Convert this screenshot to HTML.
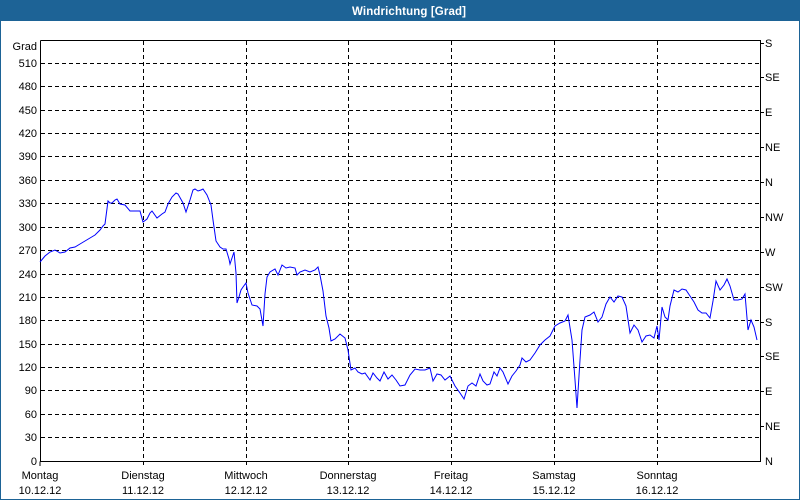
<!DOCTYPE html>
<html><head><meta charset="utf-8"><style>
html,body{margin:0;padding:0;width:800px;height:500px;overflow:hidden;background:#fff}
</style></head><body>
<svg width="800" height="500" xmlns="http://www.w3.org/2000/svg" font-family="Liberation Sans, sans-serif" font-size="11">
<rect x="0" y="0" width="800" height="500" fill="#fff"/>
<rect x="0.5" y="0.5" width="799" height="499" fill="none" stroke="#1d6396" stroke-width="1"/>
<rect x="0" y="0" width="800" height="21" fill="#1d6396"/>
<text x="409" y="15" fill="#fff" font-weight="bold" text-anchor="middle" font-size="11.5" textLength="114" lengthAdjust="spacing">Windrichtung [Grad]</text>
<g stroke="#000" stroke-width="1" stroke-dasharray="4,3" shape-rendering="crispEdges">
<line x1="41" y1="63.5" x2="760" y2="63.5"/>
<line x1="41" y1="86.5" x2="760" y2="86.5"/>
<line x1="41" y1="110.5" x2="760" y2="110.5"/>
<line x1="41" y1="133.5" x2="760" y2="133.5"/>
<line x1="41" y1="156.5" x2="760" y2="156.5"/>
<line x1="41" y1="180.5" x2="760" y2="180.5"/>
<line x1="41" y1="203.5" x2="760" y2="203.5"/>
<line x1="41" y1="227.5" x2="760" y2="227.5"/>
<line x1="41" y1="250.5" x2="760" y2="250.5"/>
<line x1="41" y1="274.5" x2="760" y2="274.5"/>
<line x1="41" y1="297.5" x2="760" y2="297.5"/>
<line x1="41" y1="320.5" x2="760" y2="320.5"/>
<line x1="41" y1="344.5" x2="760" y2="344.5"/>
<line x1="41" y1="367.5" x2="760" y2="367.5"/>
<line x1="41" y1="390.5" x2="760" y2="390.5"/>
<line x1="41" y1="414.5" x2="760" y2="414.5"/>
<line x1="41" y1="437.5" x2="760" y2="437.5"/>
<line x1="143.5" y1="41" x2="143.5" y2="467"/>
<line x1="246.5" y1="41" x2="246.5" y2="467"/>
<line x1="348.5" y1="41" x2="348.5" y2="467"/>
<line x1="451.5" y1="41" x2="451.5" y2="467"/>
<line x1="554.5" y1="41" x2="554.5" y2="467"/>
<line x1="657.5" y1="41" x2="657.5" y2="467"/>
</g>
<g stroke="#000" stroke-width="1" fill="none" shape-rendering="crispEdges">
<polyline points="40.5,40.5 760.5,40.5 760.5,461.5 40.5,461.5 40.5,40.5"/>
<line x1="40" y1="461.5" x2="40" y2="466"/>
<line x1="760" y1="43.5" x2="764" y2="43.5"/><line x1="760" y1="77.5" x2="764" y2="77.5"/><line x1="760" y1="112.5" x2="764" y2="112.5"/><line x1="760" y1="147.5" x2="764" y2="147.5"/><line x1="760" y1="182.5" x2="764" y2="182.5"/><line x1="760" y1="217.5" x2="764" y2="217.5"/><line x1="760" y1="252.5" x2="764" y2="252.5"/><line x1="760" y1="287.5" x2="764" y2="287.5"/><line x1="760" y1="322.5" x2="764" y2="322.5"/><line x1="760" y1="356.5" x2="764" y2="356.5"/><line x1="760" y1="391.5" x2="764" y2="391.5"/><line x1="760" y1="426.5" x2="764" y2="426.5"/>
</g>
<g fill="#000" text-anchor="end">
<text x="37" y="50">Grad</text>
<text x="37" y="67">510</text><text x="37" y="90">480</text><text x="37" y="114">450</text><text x="37" y="137">420</text><text x="37" y="160">390</text><text x="37" y="184">360</text><text x="37" y="207">330</text><text x="37" y="231">300</text><text x="37" y="254">270</text><text x="37" y="278">240</text><text x="37" y="301">210</text><text x="37" y="324">180</text><text x="37" y="348">150</text><text x="37" y="371">120</text><text x="37" y="394">90</text><text x="37" y="418">60</text><text x="37" y="441">30</text><text x="37" y="465">0</text>
</g>
<g fill="#000">
<text x="765" y="47">S</text><text x="765" y="81">SE</text><text x="765" y="116">E</text><text x="765" y="151">NE</text><text x="765" y="186">N</text><text x="765" y="221">NW</text><text x="765" y="256">W</text><text x="765" y="291">SW</text><text x="765" y="326">S</text><text x="765" y="360">SE</text><text x="765" y="395">E</text><text x="765" y="430">NE</text><text x="765" y="465">N</text>
</g>
<g fill="#000" text-anchor="middle">
<text x="40" y="479">Montag</text><text x="40" y="494">10.12.12</text>
<text x="143" y="479">Dienstag</text><text x="143" y="494">11.12.12</text>
<text x="246" y="479">Mittwoch</text><text x="246" y="494">12.12.12</text>
<text x="348" y="479">Donnerstag</text><text x="348" y="494">13.12.12</text>
<text x="451" y="479">Freitag</text><text x="451" y="494">14.12.12</text>
<text x="554" y="479">Samstag</text><text x="554" y="494">15.12.12</text>
<text x="657" y="479">Sonntag</text><text x="657" y="494">16.12.12</text>
</g>
<polyline fill="none" stroke="#0000ff" stroke-width="1" points="40,262 45,256 50,252 55,250 60,253 65,252 70,248 75,247 80,244 85,241 90,238 95,235 100,230 103,226 105,224 108,201 110,203 112,203 115,200 117,199 120,204 125,205 130,211 135,211 140,211 143,222 147,219 150,213 152,211 157,218 162,214 165,212 168,204 172,197 176,193 178,194 183,203 186,212 190,200 193,190 195,189 198,191 201,190 203,189 207,195 211,205 213,220 216,241 220,247 223,249 226,249 229,259 230,264 233,255 234,252 236,273 237,303 239,297 241,290 243,287 246,283 248,293 252,305 257,306 260,309 263,326 265,294 267,277 270,272 275,269 278,275 282,265 286,268 290,267 295,268 297,275 300,272 305,270 310,272 315,270 318,267 320,275 323,291 326,316 329,328 331,341 335,339 340,334 345,338 348,350 351,370 355,368 358,372 362,374 365,373 370,380 373,373 377,378 380,381 384,372 388,379 392,375 396,380 400,386 405,385 410,375 415,369 420,370 425,370 430,368 433,381 437,374 441,375 445,380 450,376 455,386 460,393 464,399 468,386 472,383 476,386 480,374 483,381 487,385 490,384 494,372 497,376 500,368 503,372 508,384 512,376 516,371 520,365 522,358 526,362 530,360 535,353 540,345 545,340 550,336 555,326 560,323 565,321 568,315 572,340 575,380 577,408 580,360 582,330 585,317 590,315 594,312 598,322 602,317 606,304 610,297 614,302 618,296 622,297 626,306 630,333 634,325 638,330 642,342 646,336 650,335 654,338 657,326 659,340 662,307 665,317 668,320 670,306 674,290 678,292 682,289 686,290 690,296 694,302 698,310 702,313 706,313 710,318 713,301 716,281 720,290 724,285 727,279 730,286 734,300 738,300 742,299 745,294 748,330 751,320 754,327 757,340"/>
</svg>
</body></html>
